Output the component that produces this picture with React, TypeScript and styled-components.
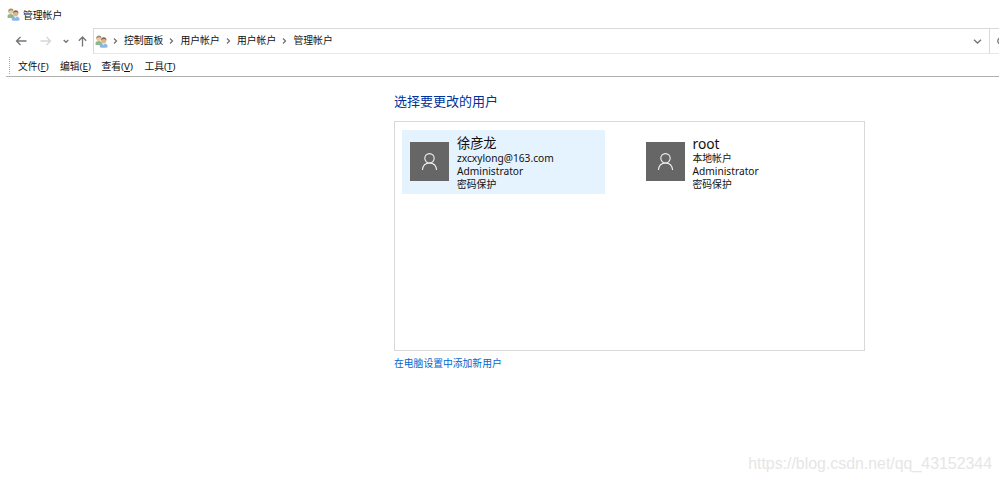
import React from "react";
import styled, { createGlobalStyle } from "styled-components";

const GlobalStyle = createGlobalStyle`
  * { box-sizing: border-box; }
  body {
    margin: 0;
    background: #fff;
    overflow: hidden;
    font-family: "Noto Sans", "Noto Sans CJK SC", sans-serif;
    font-size: 9.8px;
    color: #111;
  }
`;

const Window = styled.div`
  display: flex;
  flex-direction: column;
  width: 1001px;
  height: 482px;
  white-space: nowrap;
`;

const TitleBar = styled.header`
  display: flex;
  align-items: center;
  gap: 3px;
  height: 28px;
  padding: 1px 0 0 7px;
  line-height: 14px;
`;

const Title = styled.span`
  padding-top: 3px;
`;

const NavBar = styled.nav`
  display: flex;
  height: 26px;
  margin-right: 2px;
`;

const NavButtons = styled.div`
  display: flex;
  align-items: center;
  width: 93px;
  padding-left: 15px;
`;

const NavIcon = styled.svg<{ $gap?: number; $color?: string }>`
  flex: none;
  margin-right: ${(p) => p.$gap ?? 0}px;
  fill: none;
  stroke: ${(p) => p.$color ?? "#747474"};
  stroke-width: 1.3;
`;

const AddressBar = styled.div`
  display: flex;
  align-items: center;
  width: 897px;
  padding: 0 7px 0 1px;
  border: 1px solid #d9d9d9;
  border-bottom-color: #e8e8e8;
`;

const SearchBox = styled.div`
  display: flex;
  align-items: center;
  justify-content: flex-end;
  flex: 1;
  overflow: hidden;
  border: solid #d9d9d9;
  border-width: 1px 0;
  border-bottom-color: #e8e8e8;
`;

const Breadcrumbs = styled.div`
  display: flex;
  flex: 1;
  padding-left: 4.5px;
`;

const Crumb = styled.span`
  display: flex;
  align-items: center;
  width: 56.5px;
  line-height: 14px;
`;

const MenuBar = styled.div`
  display: flex;
  align-items: center;
  height: 23px;
  margin: 0 2px 0 6px;
  padding: 1px 0 0 3px;
  border-bottom: 1px solid #b0b0b0;
  line-height: 14px;
`;

const Grip = styled.div`
  height: 17px;
  margin-right: 8px;
  border-left: 1px dotted #aaa;
`;

const MenuItem = styled.span<{ $width: number }>`
  width: ${(p) => p.$width}px;
  padding-top: 3px;
  u { text-underline-offset: 1px; }
`;

const Content = styled.main`
  display: flex;
  flex-direction: column;
  flex: 1;
  padding: 14px 0 0 394px;
`;

const Heading = styled.h1`
  height: 30px;
  margin: 0;
  color: #003399;
  font-size: 13px;
  font-weight: 400;
  line-height: 20px;
`;

const AccountPanel = styled.section`
  display: flex;
  align-items: flex-start;
  gap: 32.5px;
  width: 471px;
  height: 230px;
  padding: 8px 7px;
  border: 1px solid #d9d9d9;
`;

const Account = styled.div<{ $selected?: boolean }>`
  display: flex;
  align-items: center;
  width: 203px;
  height: 64px;
  padding-left: 8px;
  background: ${(p) => (p.$selected ? "#e5f3ff" : "transparent")};
`;

const Avatar = styled.div`
  display: flex;
  align-items: center;
  justify-content: center;
  width: 39px;
  height: 39px;
  margin: 0 8px 1px 0;
  background: #666;
`;

const Details = styled.div`
  display: flex;
  flex-direction: column;
  line-height: 13px;
  padding-top: 1px;
`;

const Name = styled.span<{ $latin?: boolean }>`
  font-size: ${(p) => (p.$latin ? 13.8 : 13.2)}px;
  line-height: 17px;
`;

const Latin = styled.span`
  font-size: 10.2px;
`;

const AddLink = styled.a`
  margin-top: 6px;
  color: #0066cc;
  line-height: 14px;
`;

const Watermark = styled.footer`
  padding: 0 9px 8px 0;
  color: #e6e6e6;
  font: 15.9px/20px "Liberation Sans", Arial, sans-serif;
  text-align: right;
`;

const UsersIcon = () => (
  <svg width="13" height="13" viewBox="0 0 13 13">
    <path d="M.5 9.5V7.8Q.8 5.9 3.7 5.9T7 7.9V10H1Z" fill="#8fb78c" />
    <circle cx="3.8" cy="3.4" r="2.5" fill="#e8cba2" />
    <path d="M1.2 4.2V2.8Q1.7.5 4 .6 6.6.7 6.5 3L4.2 2.2 2 3Z" fill="#a58e68" />
    <path d="M4.8 12.2v-2Q5.5 8.2 8.6 8.2t3.9 2.3v1.7Q8.7 13.4 4.8 12.2Z" fill="#8bb7e2" />
    <path d="m7.2 8.3 1.5 2 1.4-2Z" fill="#edf4fa" />
    <circle cx="8.7" cy="5.6" r="2.6" fill="#dfb58e" />
    <path d="M6.1 5.5V4.2Q6.6 2.2 8.8 2.2t2.6 2v1.3L10 4.1 7.1 4.2Z" fill="#80644c" />
  </svg>
);

const ChevronRight = ({ gap = 0 }: { gap?: number }) => (
  <NavIcon $gap={gap} width="5" height="8" viewBox="0 0 5 8">
    <path d="M1 1.5 3.5 4 1 6.5" />
  </NavIcon>
);

const PersonIcon = () => (
  <svg width="17" height="19" viewBox="0 0 17 19" fill="none" stroke="#f2f2f2" strokeWidth="1.1">
    <circle cx="8.5" cy="6.3" r="4.7" />
    <path d="M1.4 18C1.8 13.7 4.5 11 8.5 11s6.7 2.7 7.1 7" />
  </svg>
);

const crumbs = ["控制面板", "用户帐户", "用户帐户", "管理帐户"];
const menus = [
  { label: "文件", key: "F", width: 42 },
  { label: "编辑", key: "E", width: 41.5 },
  { label: "查看", key: "V", width: 43 },
  { label: "工具", key: "T", width: 42 },
];
const accounts = [
  { name: "徐彦龙", kind: "zxcxylong@163.com", selected: true },
  { name: "root", kind: "本地帐户", selected: false },
];

export default function App() {
  return (
    <>
      <GlobalStyle />
      <Window>
        <TitleBar>
          <UsersIcon />
          <Title>管理帐户</Title>
        </TitleBar>
        <NavBar>
          <NavButtons>
            <NavIcon $gap={13} width="12" height="10" viewBox="0 0 12 10">
              <path d="M11.5 5H1.5M5.5 1 1.5 5l4 4" />
            </NavIcon>
            <NavIcon $gap={11} $color="#d6d6d6" width="12" height="10" viewBox="0 0 12 10">
              <path d="M.5 5h10M6.5 1l4 4-4 4" />
            </NavIcon>
            <NavIcon $gap={9} width="6" height="5" viewBox="0 0 6 5">
              <path d="M.7 1 3 3.3 5.3 1" />
            </NavIcon>
            <NavIcon width="9" height="11" viewBox="0 0 9 11">
              <path d="M4.5 10.5V1M.8 4.8 4.5 1l3.7 3.8" />
            </NavIcon>
          </NavButtons>
          <AddressBar>
            <UsersIcon />
            <Breadcrumbs>
              {crumbs.map((crumb, i) => (
                <Crumb key={i}>
                  <ChevronRight gap={6.5} />
                  {crumb}
                </Crumb>
              ))}
            </Breadcrumbs>
            <NavIcon width="9" height="7" viewBox="0 0 9 7">
              <path d="M1 1.7 4.5 5 8 1.7" />
            </NavIcon>
          </AddressBar>
          <SearchBox>
            <NavIcon width="2" height="8" viewBox="0 0 2 8">
              <circle cx="4" cy="4" r="3.2" />
            </NavIcon>
          </SearchBox>
        </NavBar>
        <MenuBar>
          <Grip />
          {menus.map((m) => (
            <MenuItem key={m.key} $width={m.width}>
              {m.label}(<u>{m.key}</u>)
            </MenuItem>
          ))}
        </MenuBar>
        <Content>
          <Heading>选择要更改的用户</Heading>
          <AccountPanel>
            {accounts.map((a) => (
              <Account key={a.name} $selected={a.selected}>
                <Avatar>
                  <PersonIcon />
                </Avatar>
                <Details>
                  <Name $latin={a.name === "root"}>{a.name}</Name>
                  {a.selected ? <Latin>{a.kind}</Latin> : <span>{a.kind}</span>}
                  <Latin>Administrator</Latin>
                  <span>密码保护</span>
                </Details>
              </Account>
            ))}
          </AccountPanel>
          <AddLink>在电脑设置中添加新用户</AddLink>
        </Content>
        <Watermark>https://blog.csdn.net/qq_43152344</Watermark>
      </Window>
    </>
  );
}
